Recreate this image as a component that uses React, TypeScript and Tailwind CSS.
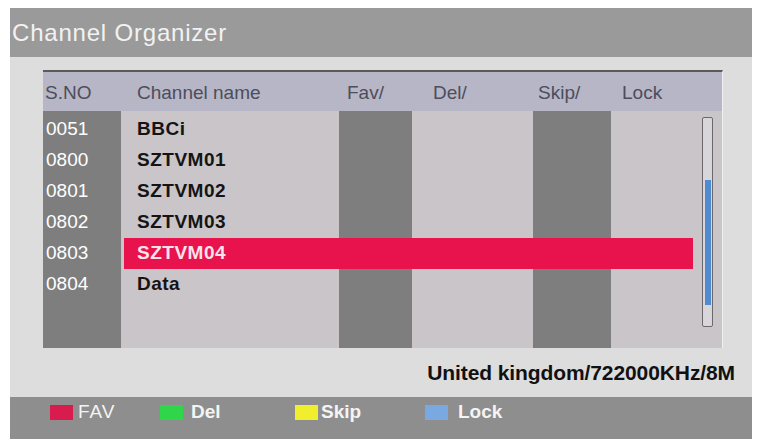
const font = { fontFamily: '"Liberation Sans", Arial, sans-serif' }

type Channel = { no: string; name: string }

const channels: Channel[] = [
  { no: "0051", name: "BBCi" },
  { no: "0800", name: "SZTVM01" },
  { no: "0801", name: "SZTVM02" },
  { no: "0802", name: "SZTVM03" },
  { no: "0803", name: "SZTVM04" },
  { no: "0804", name: "Data" },
]

const selected = "0803"

function Legend({ color, label, bold, gap }: { color: string; label: string; bold?: boolean; gap: string }) {
  return (
    <div className={`flex items-center ${gap}`}>
      <span className={`block w-[23px] h-[15px] ${color}`} />
      <span className={`text-[19px] text-[#f4f4f4] ${bold ? "font-bold" : "tracking-[1px]"}`}>{label}</span>
    </div>
  )
}

export default function App() {
  return (
    <div className="w-[759px] h-[439px] bg-white pl-[10px] pr-[7px] pt-[8px] overflow-hidden" style={font}>
      <div className="flex flex-col h-full">
        {/* title bar */}
        <div className="h-[49px] shrink-0 bg-[#9a9a9a] flex items-center pl-[2px]">
          <span className="text-[24px] tracking-[0.8px] text-[#f2f2f2]">Channel Organizer</span>
        </div>

        {/* body */}
        <div className="flex-1 bg-[#dddddd] flex flex-col pl-[33px] pt-[13px]">
          <div className="w-[680px] h-[278px] flex flex-col border-t-2 border-[#5a5a5a] border-r border-r-[#f0f0f0]">
            <div className="h-[39px] shrink-0 bg-[#b6b6c6] flex items-center pl-[2px] pt-[3px] text-[19px] text-[#4d4d5c]">
              <span className="w-[92px]">S.NO</span>
              <span className="w-[210px]">Channel name</span>
              <span className="w-[86px]">Fav/</span>
              <span className="w-[105px]">Del/</span>
              <span className="w-[84px]">Skip/</span>
              <span>Lock</span>
            </div>

            <div className="flex-1 grid">
              {/* column stripes */}
              <div className="[grid-area:1/1] flex">
                <div className="w-[78px] bg-[#7e7e7e]" />
                <div className="w-[218px] bg-[#c9c5c9]" />
                <div className="w-[73px] bg-[#7e7e7e]" />
                <div className="w-[121px] bg-[#c9c5c9]" />
                <div className="w-[78px] bg-[#7e7e7e]" />
                <div className="flex-1 bg-[#c9c5c9]" />
              </div>

              {/* rows */}
              <div className="[grid-area:1/1] flex flex-col pt-[3px]">
                {channels.map((c) => {
                  const on = c.no === selected
                  return (
                    <div key={c.no} className="flex h-[31px] items-center">
                      <span className="w-[78px] pl-[3px] text-[19px] text-white">{c.no}</span>
                      <div
                        className={`ml-[3px] w-[569px] h-full flex items-center pl-[13px] ${
                          on ? "bg-[#e8124c]" : ""
                        }`}
                      >
                        <span
                          className={`text-[19px] font-bold tracking-[0.5px] ${
                            on ? "text-[#fbe3ea]" : "text-[#141414]"
                          }`}
                        >
                          {c.name}
                        </span>
                      </div>
                    </div>
                  )
                })}
              </div>

              {/* scrollbar */}
              <div className="[grid-area:1/1] flex justify-end items-start pr-[9px] pt-[6px]">
                <div className="w-[11px] h-[210px] rounded-[2px] border border-[#6a6a6a] bg-[#d8d6da] flex flex-col items-center pt-[62px]">
                  <div className="w-[6px] h-[125px] bg-[#4f8bd0]" />
                </div>
              </div>
            </div>
          </div>

          <div className="flex-1 flex items-center justify-end pr-[17px]">
            <span className="text-[21px] font-bold text-[#111111] tracking-[-0.1px]">United kingdom/722000KHz/8M</span>
          </div>
        </div>

        {/* legend */}
        <div className="h-[42px] shrink-0 bg-[#8e8e8e] flex items-center pl-[40px] pb-[11px]">
          <div className="w-[110px]">
            <Legend color="bg-[#d91c4e]" label="FAV" gap="gap-[5px]" />
          </div>
          <div className="w-[135px]">
            <Legend color="bg-[#2fd64a]" label="Del" bold gap="gap-[8px]" />
          </div>
          <div className="w-[130px]">
            <Legend color="bg-[#f1ee2e]" label="Skip" bold gap="gap-[3px]" />
          </div>
          <Legend color="bg-[#7aa9e2]" label="Lock" bold gap="gap-[10px]" />
        </div>
      </div>
    </div>
  )
}
